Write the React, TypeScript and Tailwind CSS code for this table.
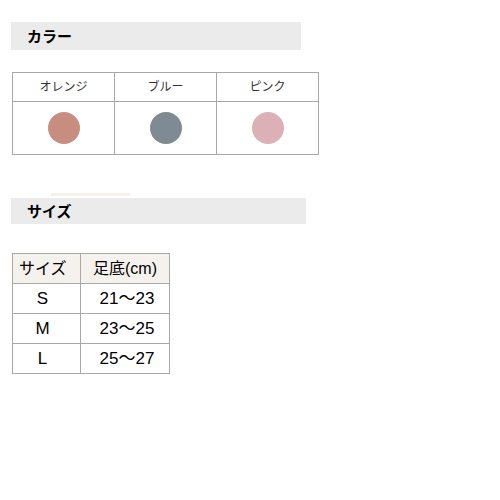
const colors = [
  { name: "オレンジ", hex: "#c78e80" },
  { name: "ブルー", hex: "#7f8a92" },
  { name: "ピンク", hex: "#dbb1b7" },
];

const sizes = [
  { size: "S", foot: "21〜23" },
  { size: "M", foot: "23〜25" },
  { size: "L", foot: "25〜27" },
];

const font = "font-['Liberation_Sans','Noto_Sans_CJK_JP',sans-serif]";

export default function App() {
  return (
    <div className={`w-[500px] h-[500px] bg-white pl-[11px] pt-[22px] ${font}`}>
      <div className="w-[290px] h-[28px] bg-[#ebebeb] flex items-center pl-[16px]">
        <h2 className="text-[15px] font-bold text-black leading-none">カラー</h2>
      </div>

      <table className="mt-[22px] ml-px border-collapse">
        <tbody>
          <tr className="h-[29px]">
            {colors.map((c) => (
              <td
                key={c.name}
                className="w-[102px] border border-[#a8a8a8] text-center text-[12px] text-[#333]"
              >
                {c.name}
              </td>
            ))}
          </tr>
          <tr className="h-[53px]">
            {colors.map((c) => (
              <td key={c.name} className="border border-[#a8a8a8]">
                <div
                  className="w-[32px] h-[32px] rounded-full mx-auto"
                  style={{ backgroundColor: c.hex }}
                />
              </td>
            ))}
          </tr>
        </tbody>
      </table>

      <div className="ml-[40px] mt-[38px] w-[79px] h-[3px] bg-[#f4f0ea]" />
      <div className="mt-[2px] w-[295px] h-[26px] bg-[#ebebeb] flex items-center pl-[16px]">
        <h2 className="text-[15px] font-bold text-black leading-none">サイズ</h2>
      </div>

      <table className="mt-[29px] ml-px border-collapse text-black">
        <thead>
          <tr className="h-[30px] bg-[#f5f1ed]">
            <th className="w-[68px] border border-[#a8a8a8] font-normal text-[16px] text-left pl-[6px]">
              サイズ
            </th>
            <th className="w-[89px] border border-[#a8a8a8] font-normal text-[16px] text-center">
              足底(cm)
            </th>
          </tr>
        </thead>
        <tbody>
          {sizes.map((s) => (
            <tr key={s.size} className="h-[30px]">
              <td className="border border-[#a8a8a8] text-[17px] text-center pr-[8px]">
                {s.size}
              </td>
              <td className="border border-[#a8a8a8] text-[17px] text-center pl-[4px]">
                {s.foot}
              </td>
            </tr>
          ))}
        </tbody>
      </table>
    </div>
  );
}
